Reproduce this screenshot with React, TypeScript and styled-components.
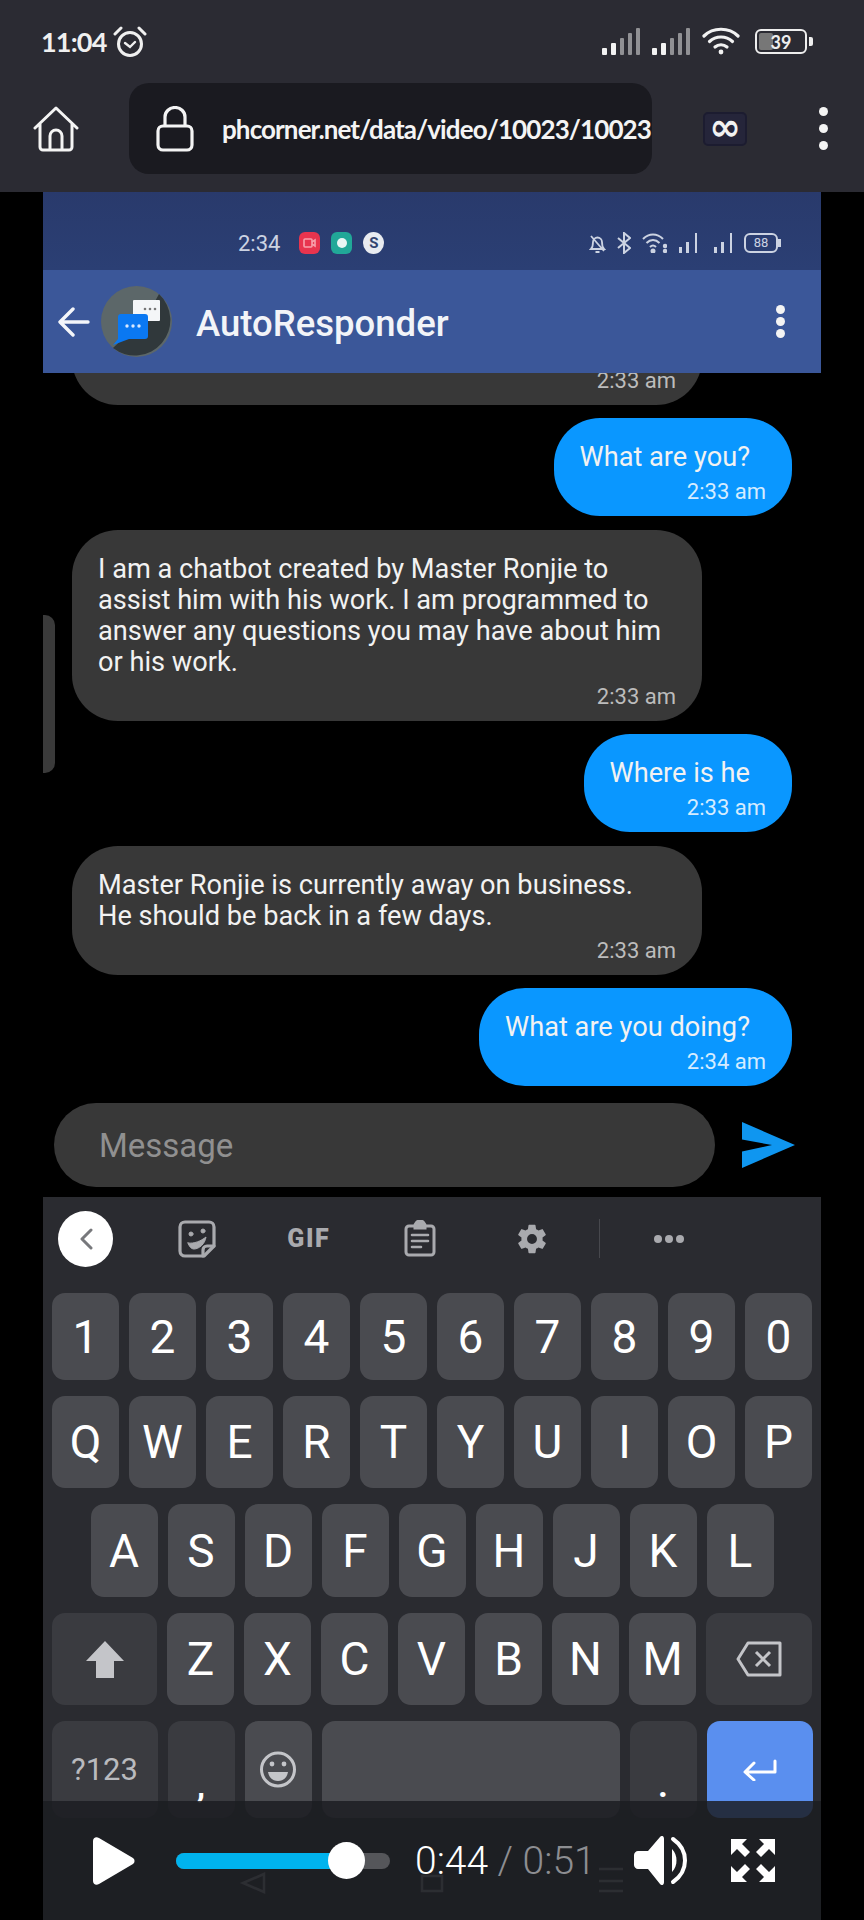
import React from "react";
import styled, { createGlobalStyle } from "styled-components";

const GlobalStyle = createGlobalStyle`
    html, body {
        margin: 0;
        padding: 0;
        background: #000;
    }
    * {
        box-sizing: border-box;
    }
    svg {
        flex-shrink: 0;
    }
`

const Page = styled.div`
    position: relative;
    width: 864px;
    height: 1920px;
    background: #000;
    overflow: hidden;
    font-family: Roboto, "Liberation Sans", sans-serif;
    display: flex;
    flex-direction: column;
`

/* phone browser chrome */
const TopBar = styled.header`
    height: 192px;
    background: #2b2b33;
    display: flex;
    flex-direction: column;
    flex-shrink: 0;
`
const StatusRow = styled.div`
    height: 83px;
    padding: 0 57px 0 41px;
    display: flex;
    align-items: center;
    color: #f0f0f0;
`
const Clock = styled.span`
    font-family: Lato, sans-serif;
    font-weight: 700;
    font-size: 27px;
    letter-spacing: -0.8px;
    margin-right: 6px;
`
const StatusIcons = styled.div`
    margin-left: auto;
    display: flex;
    align-items: center;
    gap: 10px;
`
const Battery = styled.div`
    position: relative;
    width: 52px;
    height: 25px;
    border: 2px solid #eee;
    border-radius: 6px;
    padding: 2px;
    margin-left: 3px;
    &::before {
        content: "";
        display: block;
        width: 14px;
        height: 100%;
        background: #777;
        border-radius: 2px;
    }
    &::after {
        content: "";
        position: absolute;
        right: -8px;
        top: 6px;
        width: 4px;
        height: 9px;
        background: #eee;
        border-radius: 0 2px 2px 0;
    }
`
const BatteryText = styled.span`
    position: absolute;
    inset: 0;
    display: flex;
    align-items: center;
    justify-content: center;
    font-family: Lato, sans-serif;
    font-size: 18px;
    font-weight: 700;
    color: #eee;
`
const BrowserRow = styled.div`
    height: 91px;
    display: flex;
    align-items: center;
    padding-left: 33px;
`
const AddressPill = styled.div`
    width: 523px;
    height: 91px;
    margin-left: 50px;
    padding: 0 0 0 27px;
    background: #1a1a20;
    border-radius: 20px;
    display: flex;
    align-items: center;
    overflow: hidden;
`
const UrlText = styled.span`
    margin-left: 28px;
    font-family: Lato, sans-serif;
    font-weight: 700;
    font-size: 26px;
    letter-spacing: -0.9px;
    color: #f4f4f4;
    white-space: nowrap;
`
const TabCount = styled.div`
    width: 44px;
    height: 34px;
    margin-left: 51px;
    background: #25253a;
    border: 2px solid #1c1c30;
    border-radius: 5px;
    color: #f2f2f2;
    font-family: "DejaVu Sans", sans-serif;
    font-size: 38px;
    font-weight: 700;
    line-height: 26px;
    text-align: center;
`
const MenuDots = styled.div`
    margin-left: 72px;
    display: flex;
    flex-direction: column;
    gap: 8px;
`
const Dot = styled.i<{ $size: number }>`
    display: block;
    width: ${p => p.$size}px;
    height: ${p => p.$size}px;
    border-radius: 50%;
    background: #f4f4f4;
`

/* recorded phone screen */
const Stage = styled.main`
    position: relative;
    width: 778px;
    margin-left: 43px;
    flex: 1;
    min-height: 0;
    display: flex;
    flex-direction: column;
`
const InnerStatus = styled.div`
    height: 78px;
    flex-shrink: 0;
    background: linear-gradient(#293a6c, #2b3f74);
    padding: 24px 43px 0 195px;
    display: flex;
    align-items: center;
    color: #ccd3e2;
`
const InnerClock = styled.span`
    font-size: 22px;
    margin-right: 19px;
`
const AppBadge = styled.span<{ $bg: string; $round?: boolean }>`
    width: 21px;
    height: 22px;
    margin-right: 11px;
    background: ${p => p.$bg};
    border-radius: ${p => (p.$round ? "50%" : "6px")};
    display: flex;
    align-items: center;
    justify-content: center;
    color: #33456f;
    font-size: 15px;
    font-weight: 700;
`
const InnerIcons = styled.div`
    margin-left: auto;
    display: flex;
    align-items: center;
    gap: 11px;
`
const InnerBattery = styled.div`
    position: relative;
    width: 34px;
    height: 20px;
    border: 2px solid #ccd3e2;
    border-radius: 6px;
    font-size: 13px;
    line-height: 16px;
    text-align: center;
    &::after {
        content: "";
        position: absolute;
        right: -5px;
        top: 4px;
        width: 3px;
        height: 8px;
        background: #ccd3e2;
    }
`
const AppHeader = styled.div`
    height: 103px;
    flex-shrink: 0;
    position: relative;
    z-index: 1;
    background: #3b5799;
    display: flex;
    align-items: center;
    padding-left: 15px;
`
const AppTitle = styled.h1`
    margin: 3px 0 0 24px;
    font-size: 36.5px;
    font-weight: 500;
    color: #f2f4f8;
`
const HeaderMenu = styled.div`
    margin-left: auto;
    margin-right: 36px;
    display: flex;
    flex-direction: column;
    gap: 3px;
`
const ChatList = styled.section`
    height: 713px;
    flex-shrink: 0;
    overflow: hidden;
    padding: 0 29px;
    display: flex;
    flex-direction: column;
    justify-content: flex-end;
    gap: 13.5px;
`
const Bubble = styled.div<{ $mine?: boolean; $clipped?: boolean }>`
    flex-shrink: 0;
    display: flex;
    flex-direction: column;
    justify-content: flex-end;
    gap: 6px;
    width: ${p => (p.$mine ? "fit-content" : "630px")};
    min-height: ${p => (p.$clipped ? "120px" : "0")};
    align-self: ${p => (p.$mine ? "flex-end" : "flex-start")};
    padding: 24px 26px 11px;
    border-radius: 46px;
    background: ${p => (p.$mine ? "#0a97ff" : "#383838")};
`
const MessageText = styled.p<{ $mine?: boolean }>`
    margin: 0 ${p => (p.$mine ? "16px" : "0")} 0 0;
    font-size: 27.2px;
    line-height: 31px;
    color: #f2f2f2;
    white-space: pre-line;
`
const Stamp = styled.span<{ $mine?: boolean }>`
    align-self: flex-end;
    font-size: 22px;
    line-height: 26px;
    color: ${p => (p.$mine ? "#d5ecff" : "#bcbcbc")};
`
const ScrollHandle = styled.div`
    position: absolute;
    left: 0;
    top: 423px;
    width: 12px;
    height: 158px;
    background: #3a3a3a;
    border-radius: 0 10px 10px 0;
`
const Composer = styled.div`
    height: 111px;
    flex-shrink: 0;
    padding: 17px 26px 0 11px;
    display: flex;
    justify-content: space-between;
`
const MessageInput = styled.div`
    width: 661px;
    height: 84px;
    padding-left: 45px;
    background: #383838;
    border-radius: 42px;
    display: flex;
    align-items: center;
    font-size: 33px;
    color: #909090;
`
const SendIcon = styled.svg`
    margin-top: 19px;
`

/* keyboard */
const Keyboard = styled.div`
    flex: 1;
    background: #2a2b30;
`
const KeyToolbar = styled.div`
    height: 96px;
    padding-bottom: 13px;
    margin-left: -13px;
    display: flex;
    align-items: center;
    color: #a9aaae;
`
const ToolSlot = styled.div`
    width: 111.5px;
    display: flex;
    justify-content: center;
    align-items: center;
`
const CollapseButton = styled.div`
    width: 55px;
    height: 56px;
    border-radius: 50%;
    background: #fff;
    display: flex;
    align-items: center;
    justify-content: center;
`
const GifLabel = styled.span`
    font-size: 25px;
    font-weight: 900;
    letter-spacing: 1.5px;
`
const ToolDivider = styled.div`
    width: 1px;
    height: 39px;
    margin-left: 11px;
    background: #47484d;
`
const MoreSlot = styled.div`
    margin-left: 54px;
    display: flex;
    gap: 3px;
`
const MoreDot = styled.i`
    display: block;
    width: 8px;
    height: 8px;
    border-radius: 50%;
    background: #a9aaae;
`
const KeyRows = styled.div`
    display: flex;
    flex-direction: column;
    gap: 16px;
`
const KeyRow = styled.div<{ $height: number }>`
    height: ${p => p.$height}px;
    display: flex;
    justify-content: center;
    gap: 10px;
`
const Key = styled.div<{ $width?: number; $tone?: "dark" | "accent"; $low?: boolean }>`
    width: ${p => p.$width ?? 67}px;
    background: ${p => (p.$tone === "dark" ? "#3a3b40" : p.$tone === "accent" ? "#5a8fef" : "#4a4b50")};
    border-radius: 13px;
    display: flex;
    align-items: ${p => (p.$low ? "flex-end" : "center")};
    justify-content: center;
    color: #fff;
    font-size: 46px;
    line-height: 1;
    padding-bottom: ${p => (p.$low ? "16px" : "0")};
`
const SymbolLabel = styled.span`
    font-size: 31px;
    color: #b9babe;
`
const PunctLabel = styled.span`
    font-size: 34px;
    font-weight: 700;
    color: #fff;
`
const NavGhosts = styled.div`
    margin-top: 38px;
    display: flex;
`

/* video controls over the keyboard */
const PlayerBar = styled.div`
    position: absolute;
    left: 0;
    right: 0;
    bottom: 0;
    height: 119px;
    background: rgba(28, 29, 33, 0.84);
    padding-left: 50px;
    display: flex;
    align-items: center;
`
const SeekTrack = styled.div`
    position: relative;
    width: 214px;
    height: 16px;
    margin-left: 41px;
    background: #55565a;
    border-radius: 8px;
`
const SeekFill = styled.div`
    height: 100%;
    background: #00b3ee;
    border-radius: 8px 0 0 8px;
`
const SeekThumb = styled.div`
    position: absolute;
    top: -11px;
    width: 37px;
    height: 37px;
    margin-left: -19px;
    border-radius: 50%;
    background: #fff;
`
const TimeLabel = styled.div`
    margin-left: 25px;
    font-size: 39px;
    font-weight: 300;
    white-space: nowrap;
    color: #fff;
`
const TimeTotal = styled.span`
    color: #8d8e92;
`
const PlayerIcons = styled.div`
    margin-left: 38px;
    display: flex;
    align-items: center;
    gap: 41px;
`

const SignalBars = () => (
    <svg width="40" height="27" viewBox="0 0 40 27">
        <rect x="0" y="20" width="5" height="7" rx="1" fill="#f2f2f2" />
        <rect x="9" y="15" width="5" height="12" rx="1" fill="#f2f2f2" />
        <rect x="18" y="10" width="4" height="17" rx="1" fill="#909094" />
        <rect x="26" y="5" width="4" height="22" rx="1" fill="#909094" />
        <rect x="34" y="0" width="4" height="27" rx="1" fill="#909094" />
    </svg>
)

const InnerSignal = ({ width }: { width: number }) => (
    <svg width={width} height="22" viewBox={`0 0 ${width} 22`} fill="#ccd3e2">
        <rect x={width - 19} y="15" width="3" height="6" />
        <rect x={width - 12} y="10" width="3" height="11" />
        <rect x={width - 3} y="1" width="2" height="20" />
    </svg>
)

const cornerArrow = "M0 0H16L11 5 19 13 14 18 6 10 0 16Z"

const numberRow = ["1", "2", "3", "4", "5", "6", "7", "8", "9", "0"]
const topRow = ["Q", "W", "E", "R", "T", "Y", "U", "I", "O", "P"]
const homeRow = ["A", "S", "D", "F", "G", "H", "J", "K", "L"]
const bottomRow = ["Z", "X", "C", "V", "B", "N", "M"]

export default function App() {
    const progress = 0.8
    return (
        <Page>
            <GlobalStyle />
            <TopBar>
                <StatusRow>
                    <Clock>11:04</Clock>
                    <svg width="34" height="33" viewBox="0 0 34 33" fill="none" stroke="#f0f0f0" strokeWidth="3" strokeLinecap="round">
                        <circle cx="17" cy="19" r="11.5" />
                        <path d="M12 18l5 4 5-5" strokeWidth="2.4" />
                        <path d="M2 9l6-6M32 9l-6-6" />
                    </svg>
                    <StatusIcons>
                        <SignalBars />
                        <SignalBars />
                        <svg width="40" height="29" viewBox="0 0 40 29" fill="none" stroke="#f2f2f2" strokeWidth="3.2" strokeLinecap="round">
                            <path d="M2 9C11 0 27 0 36 9" />
                            <path d="M7.5 14.5C14 8.5 24 8.5 30.5 14.5" />
                            <path d="M13 20C16.5 17 21.5 17 25 20" />
                            <circle cx="19" cy="25" r="2.4" fill="#f2f2f2" strokeWidth="0" />
                        </svg>
                        <Battery>
                            <BatteryText>39</BatteryText>
                        </Battery>
                    </StatusIcons>
                </StatusRow>
                <BrowserRow>
                    <svg width="46" height="46" viewBox="0 0 46 46" fill="none" stroke="#f4f4f4" strokeWidth="3" strokeLinejoin="round">
                        <path d="M2 22L23 2l21 20M7 18v23a3 3 0 0 0 3 3h26a3 3 0 0 0 3-3V18" strokeLinecap="round" />
                        <path d="M17 44V30a6 6 0 0 1 12 0v14" />
                    </svg>
                    <AddressPill>
                        <svg width="38" height="46" viewBox="0 0 38 46" fill="none" stroke="#f4f4f4" strokeWidth="3.2">
                            <rect x="2" y="20" width="34" height="24" rx="5" />
                            <path d="M9 20V11a10 9.5 0 0 1 20 0v9" />
                        </svg>
                        <UrlText>phcorner.net/data/video/10023/10023</UrlText>
                    </AddressPill>
                    <TabCount>∞</TabCount>
                    <MenuDots>
                        <Dot $size={9} />
                        <Dot $size={9} />
                        <Dot $size={9} />
                    </MenuDots>
                </BrowserRow>
            </TopBar>

            <Stage>
                <InnerStatus>
                    <InnerClock>2:34</InnerClock>
                    <AppBadge $bg="#e8344e">
                        <svg width="13" height="10" viewBox="0 0 13 10" fill="none" stroke="#f7a0ac" strokeWidth="1.6">
                            <rect x="1" y="1" width="8" height="8" rx="1" />
                            <path d="M9 4l3-2v6l-3-2" />
                        </svg>
                    </AppBadge>
                    <AppBadge $bg="#21a898">
                        <svg width="12" height="12" viewBox="0 0 12 12">
                            <circle cx="6" cy="6" r="5" fill="#e8f6f4" />
                        </svg>
                    </AppBadge>
                    <AppBadge $bg="#e8ebf0" $round>S</AppBadge>
                    <InnerIcons>
                        <svg width="17" height="21" viewBox="0 0 17 21" fill="none" stroke="#ccd3e2" strokeWidth="1.8">
                            <path d="M2 16c2-2 2-4 2-7a4.5 4.5 0 0 1 9 0c0 3 0 5 2 7zM6.5 19h4M2 3l13 15" />
                        </svg>
                        <svg width="14" height="22" viewBox="0 0 14 22" fill="none" stroke="#ccd3e2" strokeWidth="2">
                            <path d="M1 6l12 10-6 5V1l6 5L1 16" />
                        </svg>
                        <svg width="25" height="20" viewBox="0 0 25 20" fill="none" stroke="#ccd3e2" strokeWidth="2">
                            <path d="M1 6c6-6 14-6 20 0M4.500 10c4-4 9-4 13 0M8 14c2-2 4-2 6 0" />
                            <circle cx="11" cy="18" r="1.500" fill="#ccd3e2" />
                            <circle cx="23" cy="13" r="1.200" fill="#ccd3e2" />
                            <circle cx="23" cy="18" r="1.200" fill="#ccd3e2" />
                        </svg>
                        <InnerSignal width={20} />
                        <InnerSignal width={24} />
                        <InnerBattery>88</InnerBattery>
                    </InnerIcons>
                </InnerStatus>
                <AppHeader>
                    <svg width="32" height="32" viewBox="0 0 32 32" fill="none" stroke="#f4f6fa" strokeWidth="3.4" strokeLinecap="round" strokeLinejoin="round">
                        <path d="M30 16H3M15 3L2 16l13 13" />
                    </svg>
                    <svg width="71" height="71" viewBox="0 0 71 71" style={{ marginLeft: 11 }}>
                        <circle cx="35.5" cy="35.5" r="35.5" fill="#5c6769" />
                        <path d="M58 8A35.500 35.500 0 0 1 12 62L46 30z" fill="#30383b" />
                        <rect x="32" y="14" width="27" height="21" rx="1" fill="#f4f6f8" />
                        <path d="M20 28h24a3 3 0 0 1 3 3v19a3 3 0 0 1-3 3H28L12 59l5-6V31a3 3 0 0 1 3-3z" fill="#0a78f2" />
                        <g fill="#d8e8ff">
                            <circle cx="26" cy="40" r="1.700" />
                            <circle cx="32" cy="40" r="1.700" />
                            <circle cx="38" cy="40" r="1.700" />
                        </g>
                        <g fill="#777">
                            <circle cx="44" cy="23" r="1.300" />
                            <circle cx="49" cy="23" r="1.300" />
                            <circle cx="54" cy="23" r="1.300" />
                        </g>
                    </svg>
                    <AppTitle>AutoResponder</AppTitle>
                    <HeaderMenu>
                        <Dot $size={9} />
                        <Dot $size={9} />
                        <Dot $size={9} />
                    </HeaderMenu>
                </AppHeader>

                <ChatList>
                    <Bubble $clipped>
                        <Stamp>2:33 am</Stamp>
                    </Bubble>
                    <Bubble $mine>
                        <MessageText $mine>What are you?</MessageText>
                        <Stamp $mine>2:33 am</Stamp>
                    </Bubble>
                    <Bubble>
                        <MessageText>{"I am a chatbot created by Master Ronjie to\nassist him with his work. I am programmed to\nanswer any questions you may have about him\nor his work."}</MessageText>
                        <Stamp>2:33 am</Stamp>
                    </Bubble>
                    <Bubble $mine>
                        <MessageText $mine>Where is he</MessageText>
                        <Stamp $mine>2:33 am</Stamp>
                    </Bubble>
                    <Bubble>
                        <MessageText>{"Master Ronjie is currently away on business.\nHe should be back in a few days."}</MessageText>
                        <Stamp>2:33 am</Stamp>
                    </Bubble>
                    <Bubble $mine>
                        <MessageText $mine>What are you doing?</MessageText>
                        <Stamp $mine>2:34 am</Stamp>
                    </Bubble>
                </ChatList>
                <ScrollHandle />

                <Composer>
                    <MessageInput>Message</MessageInput>
                    <SendIcon width="53" height="46" viewBox="0 0 53 46">
                        <path d="M0 0L53 23 0 46V29.500L30 23 0 17.500z" fill="#0f96f0" />
                    </SendIcon>
                </Composer>

                <Keyboard>
                    <KeyToolbar>
                        <ToolSlot>
                            <CollapseButton>
                                <svg width="14" height="24" viewBox="0 0 14 24" fill="none" stroke="#77787c" strokeWidth="3" strokeLinecap="round" strokeLinejoin="round">
                                    <path d="M12 3L3 12l9 9" />
                                </svg>
                            </CollapseButton>
                        </ToolSlot>
                        <ToolSlot>
                            <svg width="38" height="38" viewBox="0 0 38 38" fill="none" stroke="#a9aaae" strokeWidth="3.2" strokeLinejoin="round" strokeLinecap="round">
                                <path d="M7 2h24a5 5 0 0 1 5 5v19L26 36H7a5 5 0 0 1-5-5V7a5 5 0 0 1 5-5z" />
                                <path d="M36 26h-7a4 4 0 0 0-4 4v6" />
                                <circle cx="13" cy="14" r="2" fill="#a9aaae" strokeWidth="1" />
                                <circle cx="25" cy="11" r="2" fill="#a9aaae" strokeWidth="1" />
                                <path d="M10 23c6 1 13-2 18-6-1 7-7 12-12 12-3 0-5-3-6-6z" fill="#a9aaae" strokeWidth="1" />
                            </svg>
                        </ToolSlot>
                        <ToolSlot>
                            <GifLabel>GIF</GifLabel>
                        </ToolSlot>
                        <ToolSlot>
                            <svg width="32" height="37" viewBox="0 0 32 37" fill="none" stroke="#a9aaae" strokeWidth="3" strokeLinecap="round">
                                <rect x="2" y="6" width="28" height="29" rx="3" />
                                <path d="M11 6a5 5 0 0 1 10 0v2H11z" fill="#a9aaae" />
                                <path d="M8 15h16M8 21h16M8 27h9" strokeWidth="2.6" />
                            </svg>
                        </ToolSlot>
                        <ToolSlot>
                            <svg width="34" height="36" viewBox="0 0 24 24" fill="#a9aaae">
                                <path d="M19.430 12.980c.04-.32.070-.640.070-.980s-.030-.660-.070-.980l2.110-1.650a.5.5 0 0 0 .120-.640l-2-3.460a.5.5 0 0 0-.610-.220l-2.490 1a7.300 7.300 0 0 0-1.690-.980l-.380-2.650A.49.49 0 0 0 14 2h-4a.49.49 0 0 0-.490.420l-.380 2.650c-.610.250-1.170.590-1.690.980l-2.490-1a.5.5 0 0 0-.610.220l-2 3.460a.490.490 0 0 0 .120.640l2.110 1.650a7.900 7.900 0 0 0 0 1.960l-2.110 1.650a.5.500 0 0 0-.120.640l2 3.460c.120.220.390.300.610.220l2.490-1c.520.400 1.080.730 1.690.980l.380 2.650c.030.240.240.420.490.420h4c.250 0 .460-.180.490-.420l.380-2.650c.610-.250 1.170-.590 1.690-.980l2.490 1c.230.090.490 0 .610-.220l2-3.460a.5.5 0 0 0-.120-.640zM12 15.500a3.500 3.500 0 1 1 0-7 3.500 3.500 0 0 1 0 7z" />
                            </svg>
                        </ToolSlot>
                        <ToolDivider />
                        <MoreSlot>
                            <MoreDot />
                            <MoreDot />
                            <MoreDot />
                        </MoreSlot>
                    </KeyToolbar>

                    <KeyRows>
                        <KeyRow $height={87}>
                            {numberRow.map(k => <Key key={k}>{k}</Key>)}
                        </KeyRow>
                        <KeyRow $height={92}>
                            {topRow.map(k => <Key key={k}>{k}</Key>)}
                        </KeyRow>
                        <KeyRow $height={93}>
                            {homeRow.map(k => <Key key={k}>{k}</Key>)}
                        </KeyRow>
                        <KeyRow $height={92}>
                            <Key $width={105} $tone="dark">
                                <svg width="38" height="37" viewBox="0 0 38 37" fill="#c4c5c9">
                                    <path d="M19 0l19 20H28v17H10V20H0z" />
                                </svg>
                            </Key>
                            {bottomRow.map(k => <Key key={k}>{k}</Key>)}
                            <Key $width={106} $tone="dark">
                                <svg width="46" height="36" viewBox="0 0 46 36" fill="none" stroke="#c4c5c9" strokeWidth="3">
                                    <path d="M12 2h32v32H12L2 18z" strokeLinejoin="round" />
                                    <path d="M20 11l14 14M34 11L20 25" />
                                </svg>
                            </Key>
                        </KeyRow>
                        <KeyRow $height={97}>
                            <Key $width={106} $tone="dark"><SymbolLabel>?123</SymbolLabel></Key>
                            <Key $tone="dark" $low><PunctLabel>,</PunctLabel></Key>
                            <Key>
                                <svg width="36" height="37" viewBox="0 0 36 37" fill="none" stroke="#c4c5c9" strokeWidth="3">
                                    <circle cx="18" cy="18.500" r="16.500" />
                                    <circle cx="12" cy="13" r="2.400" fill="#c4c5c9" strokeWidth="0" />
                                    <circle cx="24" cy="13" r="2.400" fill="#c4c5c9" strokeWidth="0" />
                                    <path d="M8 21h20c-1 6-5 9-10 9s-9-3-10-9z" fill="#c4c5c9" strokeWidth="0" />
                                </svg>
                            </Key>
                            <Key $width={298} />
                            <Key $tone="dark" $low><PunctLabel>.</PunctLabel></Key>
                            <Key $width={106} $tone="accent">
                                <svg width="34" height="22" viewBox="0 0 34 22" fill="none" stroke="#fff" strokeWidth="3" strokeLinecap="round" strokeLinejoin="round">
                                    <path d="M32 2v11H3M11 4l-9 9 9 8" />
                                </svg>
                            </Key>
                        </KeyRow>
                    </KeyRows>
                    <NavGhosts>
                        <svg width="778" height="40" viewBox="0 0 778 40" fill="none" stroke="#86878c" strokeWidth="2.500">
                            <path d="M221 18l-21 9 21 9z" />
                            <rect x="379" y="20" width="20" height="15" />
                            <path d="M556 13h24M556 25h24M556 35h24" />
                        </svg>
                    </NavGhosts>
                </Keyboard>

                <PlayerBar>
                    <svg width="42" height="48" viewBox="0 0 42 48" fill="#fff">
                        <path d="M0 4c0-3 3-5 6-3l34 20c2 1.500 2 4.500 0 6L6 47c-3 2-6 0-6-3z" />
                    </svg>
                    <SeekTrack>
                        <SeekFill style={{ width: `${progress * 100}%` }} />
                        <SeekThumb style={{ left: `${progress * 100}%` }} />
                    </SeekTrack>
                    <TimeLabel>0:44<TimeTotal> / 0:51</TimeTotal></TimeLabel>
                    <PlayerIcons>
                        <svg width="56" height="49" viewBox="0 0 56 49" fill="none">
                            <path d="M4 15h10L26 1c2-2 4-1 4 2v43c0 3-2 4-4 2L14 33H4c-2 0-4-2-4-4V19c0-2 2-4 4-4z" fill="#fff" />
                            <path d="M38 13c6 6 6 17 0 23z" fill="#fff" />
                            <path d="M39 3c16 11 16 32 0 43" stroke="#fff" strokeWidth="4" strokeLinecap="round" />
                        </svg>
                        <svg width="44" height="43" viewBox="0 0 44 43" fill="#fff">
                            <path d={cornerArrow} />
                            <path d={cornerArrow} transform="matrix(-1 0 0 1 44 0)" />
                            <path d={cornerArrow} transform="matrix(1 0 0 -1 0 43)" />
                            <path d={cornerArrow} transform="matrix(-1 0 0 -1 44 43)" />
                        </svg>
                    </PlayerIcons>
                </PlayerBar>
            </Stage>
        </Page>
    )
}
